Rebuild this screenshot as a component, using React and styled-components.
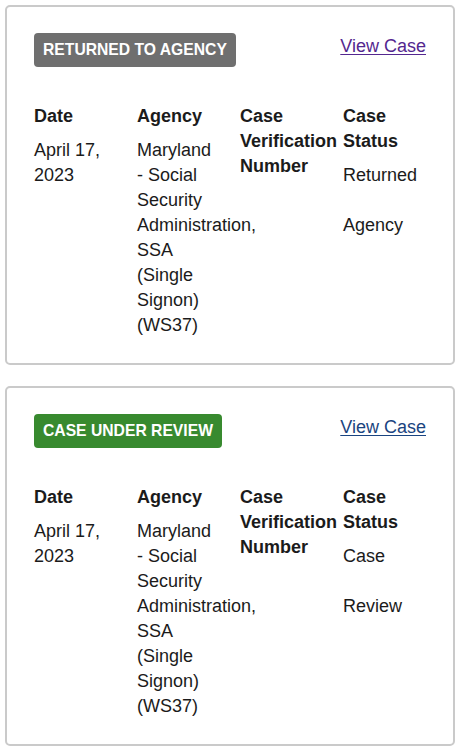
import React from "react";
import styled, { createGlobalStyle } from "styled-components";

const GlobalStyle = createGlobalStyle`
  body {
    margin: 0;
    background: #ffffff;
    font-family: "Liberation Sans", Arial, sans-serif;
    color: #1b1b1b;
  }
`;

const Page = styled.div`
  display: flex;
  flex-direction: column;
  gap: 21px;
  padding: 5px 10px 5px 5px;
`;

const Card = styled.section`
  border: 2px solid #cacaca;
  border-radius: 5px;
  padding: 26px 27px 25px 27px;
`;

const CardHeader = styled.div`
  display: flex;
  justify-content: space-between;
  align-items: flex-start;
`;

const Badge = styled.span`
  display: inline-block;
  height: 34px;
  line-height: 34px;
  padding: 0 9px;
  border-radius: 4px;
  background: ${(p) => (p.$tone === "green" ? "#388a2f" : "#6f6f6f")};
  color: #ffffff;
  font-weight: 700;
  font-size: 15.7px;
  text-transform: uppercase;
`;

const ViewLink = styled.a`
  font-size: 18px;
  line-height: 27px;
  color: ${(p) => (p.$visited ? "#54278f" : "#1a4480")};
  text-decoration: underline;
  text-underline-offset: 2px;
`;

const Table = styled.div`
  display: grid;
  grid-template-columns: repeat(4, 103px);
  margin-top: 37px;
`;

const Column = styled.div`
  display: flex;
  flex-direction: column;
  gap: 9px;
  padding-right: 12px;
  font-size: 18px;
  line-height: 25px;
`;

const Label = styled.div`
  font-weight: 700;
`;

const Value = styled.div`
  white-space: pre-line;
`;

const NoWrap = styled.span`
  white-space: nowrap;
`;

const cases = [
  { badge: "Returned to Agency", tone: "gray", visited: true, status: "Returned\n\u00a0\nAgency" },
  { badge: "Case under Review", tone: "green", visited: false, status: "Case\n\u00a0\nReview" },
];

const CaseCard = ({ item }) => (
  <Card>
    <CardHeader>
      <Badge $tone={item.tone}>{item.badge}</Badge>
      <ViewLink href="#" $visited={item.visited}>
        View Case
      </ViewLink>
    </CardHeader>
    <Table>
      <Column>
        <Label>Date</Label>
        <Value>April 17, 2023</Value>
      </Column>
      <Column>
        <Label>Agency</Label>
        <Value>
          Maryland <NoWrap>- Social</NoWrap> Security Administration, SSA (Single Signon) (WS37)
        </Value>
      </Column>
      <Column>
        <Label>Case Verification Number</Label>
        <Value />
      </Column>
      <Column>
        <Label>Case Status</Label>
        <Value>{item.status}</Value>
      </Column>
    </Table>
  </Card>
);

export default function App() {
  return (
    <Page>
      <GlobalStyle />
      {cases.map((c) => (
        <CaseCard key={c.badge} item={c} />
      ))}
    </Page>
  );
}
